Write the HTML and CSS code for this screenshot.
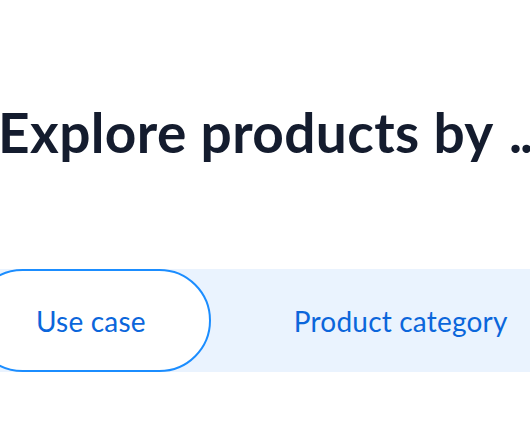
FILE: index.html
```html
<!DOCTYPE html>
<html lang="en">
<head>
<meta charset="utf-8">
<link rel="stylesheet" href="styles.css">
</head>
<body>
<div class="page">
  <h1 class="title">Explore products by <span class="dots">...</span></h1>
  <div class="tabbar">
    <div class="tabs">
      <button class="tab tab-active">Use case</button>
      <button class="tab">Product category</button>
    </div>
  </div>
</div>
</body>
</html>
```
FILE: styles.css
```css
html, body {
  margin: 0;
  padding: 0;
  background: #ffffff;
}
.page {
  width: 530px;
  height: 442px;
  overflow: hidden;
  font-family: Lato, "Open Sans", sans-serif;
}
.title {
  margin: 0 0 0 -2px;
  padding-top: 97px;
  font-size: 55px;
  line-height: 70px;
  font-weight: 700;
  color: #141c2e;
  white-space: nowrap;
  letter-spacing: 0.4px;
}
.dots {
  margin-left: 3px;
  letter-spacing: -2px;
}
.tabbar {
  margin-top: 102px;
  height: 103px;
  background: #eaf3fe;
  display: flex;
}
.tabs {
  display: flex;
  gap: 18px;
  margin-left: -29px;
}
.tab {
  box-sizing: border-box;
  height: 103px;
  padding: 0 63px;
  border: 2px solid transparent;
  border-radius: 52px;
  background: transparent;
  font-family: Lato, "Open Sans", sans-serif;
  font-size: 28px;
  letter-spacing: 0.2px;
  color: #0b66db;
  white-space: nowrap;
  flex: none;
}
.tab-active {
  background: #ffffff;
  border-color: #1b8dff;
}
```
